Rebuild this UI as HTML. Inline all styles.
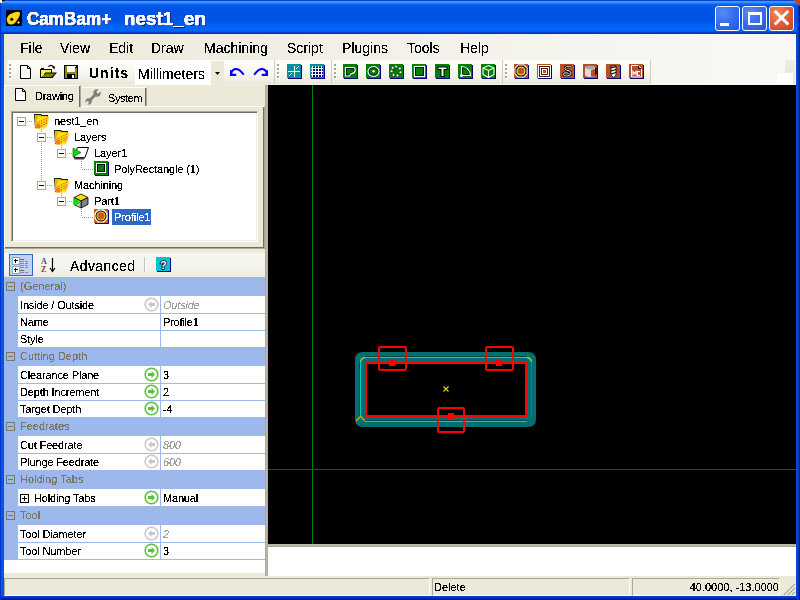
<!DOCTYPE html>
<html><head><meta charset="utf-8">
<style>
*{margin:0;padding:0;box-sizing:border-box}
html,body{width:800px;height:600px;overflow:hidden;background:#0046D5}
body{position:relative;font-family:"Liberation Sans",sans-serif;font-size:11px;color:#000;font-variant-ligatures:none}
.a{position:absolute}
.t{position:absolute;white-space:nowrap;line-height:1;filter:url(#bin)}
svg{position:absolute;display:block;overflow:visible}
</style></head><body>
<svg width="0" height="0" style="position:absolute"><filter id="bin" x="0" y="0" width="100%" height="100%" color-interpolation-filters="sRGB"><feComponentTransfer><feFuncA type="discrete" tableValues="0 0 1 1 1"/></feComponentTransfer></filter></svg>
<div class="a" style="left:0;top:0;width:800px;height:600px;background:linear-gradient(90deg,#0030C8 0,#0030C8 1px,#0058EE 1px,#0058EE 3px,#0054E3 3px,#0054E3 796px,#0050D8 796px,#0046C8 798px,#001E98 799px)"></div>
<div class="a" style="left:0;top:596px;width:800px;height:4px;background:linear-gradient(180deg,#0046E0 0,#0040D0 1px,#0030B8 2px,#001E98 3px,#00138C 4px)"></div>
<div class="a" style="left:0;top:0;width:800px;height:34px;border-radius:7px 7px 0 0;background:linear-gradient(180deg,#0848D0 0px,#0848D0 1px,#3A8FFF 1px,#4A9BFF 2px,#2C80FF 3px,#0A68F4 4px,#0058E8 6px,#0054E3 9px,#0054E3 20px,#005CEE 24px,#0066FA 28px,#0064F8 31px,#0050E0 32px,#0034B8 33px,#0030B0 34px)"></div>
<div class="a" style="left:0;top:0;width:2px;height:3px;background:#F0F0F0"></div>
<div class="a" style="left:2px;top:0;width:3px;height:1px;background:#101010"></div>
<div class="a" style="left:792px;top:0;width:8px;height:5px;background:linear-gradient(225deg,#B04820 0,#B04820 40%,transparent 60%)"></div>
<!-- app icon -->
<div class="a" style="left:6px;top:10px;width:16px;height:16px;background:#000"></div>
<svg style="left:6px;top:10px" width="16" height="16" viewBox="0 0 16 16"><path d="M1 11 C0 7 3 4 8 2.5 C11 1.5 13.5 1.5 14 3 C14.5 5 12.5 8 10.5 11 C8.5 14 6 15 4 14.5 C2 14 1.3 12.5 1 11Z" fill="#F5D816"/><circle cx="5.7" cy="9.3" r="1.5" fill="#000"/><path d="M12.5 11 L14 12.5 L12.5 14 L11 12.5Z" fill="#F5D816"/></svg>
<div class="t" style="left:27px;top:10px;font-size:18px;font-weight:bold;color:#fff;-webkit-text-stroke:0.5px #fff;transform:scaleX(0.95);transform-origin:0 0;text-shadow:1px 1px 0 #0A1E8C">CamBam+</div>
<div class="t" style="left:124px;top:10px;font-size:18px;font-weight:bold;color:#fff;-webkit-text-stroke:0.5px #fff;transform:scaleX(1.05);transform-origin:0 0;text-shadow:1px 1px 0 #0A1E8C">nest1_en</div>
<!-- caption buttons -->
<div class="a" style="left:715px;top:6px;width:25px;height:25px;border:1px solid #fff;border-radius:3px;background:radial-gradient(circle at 30% 25%,#5A8CF6 0,#3C72EE 40%,#1F55E0 100%)"></div>
<div class="a" style="left:720px;top:23px;width:9px;height:3px;background:#fff"></div>
<div class="a" style="left:742px;top:6px;width:25px;height:25px;border:1px solid #fff;border-radius:3px;background:radial-gradient(circle at 30% 25%,#5A8CF6 0,#3C72EE 40%,#1F55E0 100%)"></div>
<div class="a" style="left:748px;top:12px;width:14px;height:13px;border:2px solid #fff;border-top-width:3px"></div>
<div class="a" style="left:769px;top:6px;width:25px;height:25px;border:1px solid #fff;border-radius:3px;background:radial-gradient(circle at 30% 25%,#F08A60 0,#E3633A 40%,#C9401A 100%)"></div>
<svg style="left:769px;top:6px" width="25" height="25" viewBox="0 0 25 25"><path d="M6.8 6 L18.2 17.4 M18.2 6 L6.8 17.4" stroke="#fff" stroke-width="3" stroke-linecap="square"/></svg>
<div class="a" style="left:0;top:6px;width:1px;height:594px;background:#0034C4"></div>
<div class="a" style="left:797px;top:6px;width:3px;height:594px;background:linear-gradient(90deg,#0048D0 0,#0048D0 1px,#0036B8 1px,#0036B8 2px,#001C8C 2px)"></div>
<div class="a" style="left:4px;top:34px;width:792px;height:562px;background:#ECE9D8"></div>
<!-- menu bar -->
<div class="a" style="left:4px;top:34px;width:792px;height:26px;background:linear-gradient(90deg,#ECE9D8 0,#F1EFE6 40%,#F9F8F4 100%)"></div>
<div class="t" style="left:20px;top:41px;font-size:14px">File</div>
<div class="t" style="left:60px;top:41px;font-size:14px">View</div>
<div class="t" style="left:109px;top:41px;font-size:14px">Edit</div>
<div class="t" style="left:151px;top:41px;font-size:14px">Draw</div>
<div class="t" style="left:204px;top:41px;font-size:14px">Machining</div>
<div class="t" style="left:287px;top:41px;font-size:14px">Script</div>
<div class="t" style="left:342px;top:41px;font-size:14px">Plugins</div>
<div class="t" style="left:407px;top:41px;font-size:14px">Tools</div>
<div class="t" style="left:460px;top:41px;font-size:14px">Help</div>
<!-- toolstrip panel -->
<div class="a" style="left:4px;top:60px;width:792px;height:25px;background:linear-gradient(90deg,#ECE9D8 0,#F1EFE6 40%,#F9F8F4 100%)"></div>
<!-- toolbar 1 -->
<div class="a" style="left:7px;top:60px;width:268px;height:24px;border-radius:3px 0 0 3px;background:linear-gradient(180deg,#FDFDFB 0,#FAF9F5 40%,#F0EEE5 85%,#E9E6DA 100%);box-shadow:inset -1px 0 0 #D2CFC0"></div>
<div class="a" style="left:9px;top:64px;width:2px;height:2px;background:#A9A591;box-shadow:1px 1px 0 #fff,0 4px 0 #A9A591,1px 5px 0 #fff,0 8px 0 #A9A591,1px 9px 0 #fff,0 12px 0 #A9A591,1px 13px 0 #fff"></div>
<!-- new -->
<svg style="left:20px;top:65px" width="12" height="14" viewBox="0 0 12 14"><path d="M0.5 0.5 H7.5 L10.5 3.5 V13.5 H0.5 Z" fill="#fff" stroke="#000"/><path d="M7.5 0.5 V3.5 H10.5" fill="none" stroke="#000"/></svg>
<!-- open -->
<svg style="left:39px;top:63px" width="18" height="16" viewBox="0 0 18 16"><path d="M1 15 V6 H2 V5 H5 V6 H13 V9.5 H18 L13.5 15 Z" fill="#000"/><path d="M2 14 V7 H12 V9.5 H6.5 L2.8 14 Z" fill="#F4EA00"/><g fill="#fff"><rect x="3" y="7.5" width="1" height="1"/><rect x="5" y="7.5" width="1" height="1"/><rect x="7" y="7.5" width="1" height="1"/><rect x="9" y="7.5" width="1" height="1"/><rect x="11" y="7.5" width="1" height="1"/><rect x="4" y="9" width="1" height="1"/><rect x="2.5" y="10.5" width="1" height="1"/><rect x="4" y="11.5" width="1" height="1"/><rect x="2.5" y="12.5" width="1" height="1"/></g><path d="M3.2 14 L7 10.5 H16.2 L12.6 14 Z" fill="#808000"/><path d="M9.5 3.8 C10.5 1.8 13 1.8 14.5 3.8" fill="none" stroke="#000" stroke-width="1.2"/><path d="M12.6 3.4 H16.2 L15.4 6.4 Z" fill="#000"/></svg>
<!-- save -->
<svg style="left:64px;top:65px" width="14" height="14" viewBox="0 0 14 14" shape-rendering="crispEdges"><rect x="0" y="0" width="14" height="14" fill="#000"/><rect x="1" y="1" width="2" height="12" fill="#8C8A10"/><rect x="11" y="3" width="2" height="10" fill="#8C8A10"/><rect x="3" y="7" width="8" height="2" fill="#8C8A10"/><rect x="3" y="1" width="8" height="6" fill="#fff"/><rect x="11" y="1" width="1" height="1" fill="#fff"/><rect x="8" y="10" width="2" height="3" fill="#fff"/></svg>
<div class="t" style="left:89px;top:66px;font-size:14px;font-weight:bold;letter-spacing:1px">Units</div>
<div class="a" style="left:135px;top:61px;width:76px;height:24px;background:#fff"></div>
<div class="t" style="left:138px;top:67px;font-size:14px;width:66px;overflow:hidden">Millimeters</div>
<div class="a" style="left:211px;top:61px;width:13px;height:23px;background:#ECE9D8"></div>
<svg style="left:215px;top:72px" width="5" height="3" viewBox="0 0 5 3"><path d="M0 0H5L2.5 3Z" fill="#000"/></svg>
<!-- undo/redo -->
<svg style="left:229px;top:67px" width="16" height="10" viewBox="0 0 16 10"><path d="M2.5 5 C4.5 0.8 9.5 0.2 14.8 7.8" fill="none" stroke="#0000FF" stroke-width="2"/><path d="M1 3.2 L3.4 3.2 L3.4 6.8 L7.2 6.8 L7.2 9 L1 9 Z" fill="#0000FF"/></svg>
<svg style="left:253px;top:67px" width="16" height="10" viewBox="0 0 16 10"><g transform="translate(16 0) scale(-1 1)"><path d="M2.5 5 C4.5 0.8 9.5 0.2 14.8 7.8" fill="none" stroke="#0000FF" stroke-width="2"/><path d="M1 3.2 L3.4 3.2 L3.4 6.8 L7.2 6.8 L7.2 9 L1 9 Z" fill="#0000FF"/></g></svg>
<!-- toolbar 2 -->
<div class="a" style="left:275px;top:60px;width:57px;height:24px;border-radius:3px 0 0 3px;background:linear-gradient(180deg,#FDFDFB 0,#FAF9F5 40%,#F0EEE5 85%,#E9E6DA 100%);box-shadow:inset -1px 0 0 #D2CFC0"></div>
<div class="a" style="left:277px;top:64px;width:2px;height:2px;background:#A9A591;box-shadow:1px 1px 0 #fff,0 4px 0 #A9A591,1px 5px 0 #fff,0 8px 0 #A9A591,1px 9px 0 #fff,0 12px 0 #A9A591,1px 13px 0 #fff"></div>
<svg style="left:287px;top:64px" width="16" height="16" viewBox="0 0 16 16"><rect x="1" y="1" width="14" height="14" fill="#00007F"/><rect x="0" y="0" width="14" height="14" fill="#00929C"/><path d="M1 7.5 H13 M7.5 2 V13" stroke="#fff"/><path d="M9 5 L12 2 M2 12 L5 9" stroke="#fff"/></svg>
<svg style="left:310px;top:64px" width="16" height="16" viewBox="0 0 16 16"><rect x="1" y="1" width="14" height="14" fill="#00007F"/><rect x="0" y="0" width="14" height="14" fill="#00929C"/><rect x="2" y="3" width="11" height="10" fill="#00007F"/><path d="M1 4.5 H13 M1 7.5 H13 M1 10.5 H13 M2.5 2 V13 M5.5 2 V13 M8.5 2 V13 M11.5 2 V13" stroke="#fff"/></svg>
<!-- toolbar 3 -->
<div class="a" style="left:332px;top:60px;width:171px;height:24px;border-radius:3px 0 0 3px;background:linear-gradient(180deg,#FDFDFB 0,#FAF9F5 40%,#F0EEE5 85%,#E9E6DA 100%);box-shadow:inset -1px 0 0 #D2CFC0"></div>
<div class="a" style="left:334px;top:64px;width:2px;height:2px;background:#A9A591;box-shadow:1px 1px 0 #fff,0 4px 0 #A9A591,1px 5px 0 #fff,0 8px 0 #A9A591,1px 9px 0 #fff,0 12px 0 #A9A591,1px 13px 0 #fff"></div>
<svg style="left:343px;top:64px" width="16" height="16" viewBox="0 0 16 16"><rect x="1" y="1" width="14" height="14" fill="#00007F"/><rect x="0" y="0" width="14" height="14" fill="#007F00"/><path d="M2.5 3.5 H10 C12 3.5 12.5 5 12 7 C11.5 9 10 9.5 8 9.5 L6.5 12 H2.5 Z" fill="#000" stroke="#fff" stroke-width="1.2"/><path d="M4 5 H9.5 C10.5 5 11 6 10.5 7 C10 8 9 8 7.5 8 L6 10.5 H4Z" fill="#007F00"/></svg>
<svg style="left:366px;top:64px" width="16" height="16" viewBox="0 0 16 16"><rect x="1" y="1" width="14" height="14" fill="#00007F"/><rect x="0" y="0" width="14" height="14" fill="#007F00"/><ellipse cx="7.5" cy="7.5" rx="5.5" ry="4.8" fill="none" stroke="#fff" stroke-width="1.2"/><ellipse cx="7.5" cy="7.5" rx="4.3" ry="3.6" fill="none" stroke="#000" stroke-width="0.8"/><circle cx="7.5" cy="7.3" r="1.2" fill="#fff"/></svg>
<svg style="left:389px;top:64px" width="16" height="16" viewBox="0 0 16 16"><rect x="1" y="1" width="14" height="14" fill="#00007F"/><rect x="0" y="0" width="14" height="14" fill="#007F00"/><g fill="#fff" stroke="#000" stroke-width=".5"><circle cx="7" cy="2.6" r="1.4"/><circle cx="10.8" cy="4.5" r="1.4"/><circle cx="11.5" cy="8.3" r="1.4"/><circle cx="8.5" cy="11.5" r="1.4"/><circle cx="4.5" cy="11" r="1.4"/><circle cx="2.6" cy="7.2" r="1.4"/><circle cx="3.6" cy="3.8" r="1.4"/></g></svg>
<svg style="left:412px;top:64px" width="16" height="16" viewBox="0 0 16 16"><rect x="1" y="1" width="14" height="14" fill="#00007F"/><rect x="0" y="0" width="14" height="14" fill="#007F00"/><rect x="2.5" y="2.5" width="10" height="10" fill="none" stroke="#fff" stroke-width="1.2"/><rect x="3.5" y="3.5" width="8" height="8" fill="none" stroke="#000" stroke-width="0.8"/></svg>
<svg style="left:435px;top:64px" width="16" height="16" viewBox="0 0 16 16"><rect x="1" y="1" width="14" height="14" fill="#00007F"/><rect x="0" y="0" width="14" height="14" fill="#007F00"/><path d="M2.5 2.5 H12.5 V6 H9.5 V13 H5.5 V6 H2.5 Z" fill="#000"/><path d="M3.5 3.5 H11.5 V5 H8.5 V12 H6.5 V5 H3.5 Z" fill="#fff"/></svg>
<svg style="left:458px;top:64px" width="16" height="16" viewBox="0 0 16 16"><rect x="1" y="1" width="14" height="14" fill="#00007F"/><rect x="0" y="0" width="14" height="14" fill="#007F00"/><path d="M3.5 2.5 C8 2.5 12 6 12.5 11.5 H3.5 Z" fill="none" stroke="#fff" stroke-width="1.2"/><path d="M4.5 3.8 C8 4 11 7 11.3 10.5 H4.5Z" fill="none" stroke="#000" stroke-width="0.7"/><circle cx="3.5" cy="11.5" r="1.5" fill="#fff"/></svg>
<svg style="left:481px;top:64px" width="16" height="16" viewBox="0 0 16 16"><rect x="1" y="1" width="14" height="14" fill="#00007F"/><rect x="0" y="0" width="14" height="14" fill="#007F00"/><path d="M7.5 1.5 L13 4 V10.5 L7.5 13.5 L2 10.5 V4 Z M2 4 L7.5 6.5 L13 4 M7.5 6.5 V13.5" fill="none" stroke="#fff" stroke-width="1.1"/></svg>
<!-- toolbar 4 -->
<div class="a" style="left:503px;top:60px;width:148px;height:24px;border-radius:3px 0 0 3px;background:linear-gradient(180deg,#FDFDFB 0,#FAF9F5 40%,#F0EEE5 85%,#E9E6DA 100%);box-shadow:inset -1px 0 0 #D2CFC0"></div>
<div class="a" style="left:505px;top:64px;width:2px;height:2px;background:#A9A591;box-shadow:1px 1px 0 #fff,0 4px 0 #A9A591,1px 5px 0 #fff,0 8px 0 #A9A591,1px 9px 0 #fff,0 12px 0 #A9A591,1px 13px 0 #fff"></div>
<svg style="left:514px;top:64px" width="16" height="16" viewBox="0 0 16 16"><rect x="1" y="1" width="14" height="14" fill="#00007F"/><rect x="0" y="0" width="14" height="14" fill="#B4502A"/><path d="M4 0.5 H10 L13.5 4 V10 L10 13.5 H4 L0.5 10 V4 Z" fill="#fff"/><path d="M4.5 1.5 H9.5 L12.5 4.5 V9.5 L9.5 12.5 H4.5 L1.5 9.5 V4.5 Z" fill="#000"/><circle cx="7" cy="7" r="4.6" fill="#F0D800"/><circle cx="7" cy="7" r="3.2" fill="#B4502A"/></svg>
<svg style="left:537px;top:64px" width="16" height="16" viewBox="0 0 16 16"><rect x="1" y="1" width="14" height="14" fill="#00007F"/><rect x="0" y="0" width="14" height="14" fill="#B4502A"/><rect x="1.5" y="1.5" width="12" height="12" fill="none" stroke="#fff"/><rect x="3.5" y="3.5" width="8" height="8" fill="none" stroke="#fff"/><rect x="5.5" y="5.5" width="4" height="4" fill="none" stroke="#fff"/><rect x="2.5" y="2.5" width="10" height="10" fill="none" stroke="#000" stroke-width="0.6"/><rect x="4.5" y="4.5" width="6" height="6" fill="none" stroke="#000" stroke-width="0.6"/></svg>
<svg style="left:560px;top:64px" width="16" height="16" viewBox="0 0 16 16"><rect x="1" y="1" width="14" height="14" fill="#00007F"/><rect x="0" y="0" width="14" height="14" fill="#B4502A"/><path d="M11 3 C9 1.5 5 2 5 4.5 C5 7 11 6 11 9 C11 12 5 13 3.5 11 C2.5 9 6 8 8.5 9.5" fill="none" stroke="#000" stroke-width="2.4"/><path d="M11 3 C9 1.5 5 2 5 4.5 C5 7 11 6 11 9 C11 12 5 13 3.5 11 C2.5 9 6 8 8.5 9.5" fill="none" stroke="#fff" stroke-width="1"/></svg>
<svg style="left:583px;top:64px" width="16" height="16" viewBox="0 0 16 16"><rect x="1" y="1" width="14" height="14" fill="#00007F"/><rect x="0" y="0" width="14" height="14" fill="#B4502A"/><path d="M2 3.5 C2 1.5 12 1.5 12 3.5 V11 C12 13.5 2 13.5 2 11 Z" fill="#E0DED8"/><ellipse cx="7" cy="3.5" rx="5" ry="1.8" fill="#A8A8A8"/><path d="M8 6 V12.5 C10 12.5 12 12 12 11 V5 Z" fill="#B4502A"/><path d="M12 4 V11.5 L13.5 10 V4" fill="#000"/></svg>
<svg style="left:606px;top:64px" width="16" height="16" viewBox="0 0 16 16"><rect x="1" y="1" width="14" height="14" fill="#00007F"/><rect x="0" y="0" width="14" height="14" fill="#B4502A"/><path d="M5 2 H10 V11 L7.5 14 L5 11 Z" fill="#fff" stroke="#000" stroke-width="0.8"/><path d="M5 4 L10 2.5 M5 7 L10 5.5 M5 10 L10 8.5" stroke="#000" stroke-width="1.3"/></svg>
<svg style="left:629px;top:64px" width="16" height="16" viewBox="0 0 16 16"><rect x="1" y="1" width="14" height="14" fill="#00007F"/><rect x="0" y="0" width="14" height="14" fill="#B4502A"/><path d="M2.5 1.5 H9.5 L12.5 4.5 V13 H2.5 Z" fill="#B4502A" stroke="#fff" stroke-width="1"/><path d="M9.5 1.5 V4.5 H12.5" fill="none" stroke="#000" stroke-width=".8"/><path d="M4 11.5 V7.5 L5.5 9.5 L7 7.5 V11.5 M11 7.5 H8.5 V11.5 H11" fill="none" stroke="#fff" stroke-width="1.2"/></svg>
<!-- right small toolbar remnant -->
<div class="a" style="left:785px;top:60px;width:10px;height:24px;background:linear-gradient(180deg,#EFEDE3 0,#E6E3D5 100%)"></div>
<div class="a" style="left:777px;top:73px;width:16px;height:11px;background:#fff"></div>
<!-- left panel tab strip area -->
<div class="a" style="left:4px;top:85px;width:261px;height:491px;background:#ECE9D8"></div>
<!-- tab page border -->
<div class="a" style="left:4px;top:106px;width:261px;height:143px;border-left:1px solid #fff;border-top:1px solid #fff;border-right:1px solid #ACA899;border-bottom:1px solid #ACA899;box-shadow:inset -1px -1px 0 #716F64"></div>
<!-- System tab (unselected) -->
<div class="a" style="left:81px;top:87px;width:66px;height:19px;background:#ECE9D8;border-top:1px solid #fff;border-right:1px solid #ACA899;box-shadow:inset -1px 0 0 #716F64"></div>
<!-- Drawing tab (selected) -->
<div class="a" style="left:4px;top:85px;width:77px;height:22px;background:#ECE9D8;border-top:1px solid #fff;border-left:1px solid #fff;border-right:1px solid #ACA899;box-shadow:inset -1px 0 0 #716F64;border-radius:2px 0 0 0"></div>
<svg style="left:15px;top:88px" width="12" height="13" viewBox="0 0 12 13"><path d="M0.5 0.5 H7.5 L10.5 3.5 V12.5 H0.5 Z" fill="#fff" stroke="#000"/><path d="M7.5 0.5 V3.5 H10.5" fill="none" stroke="#000"/></svg>
<div class="t" style="left:35px;top:91px;font-size:11px;letter-spacing:-0.25px">Drawing</div>
<svg style="left:85px;top:89px" width="16" height="16" viewBox="0 0 16 16"><path d="M4 12 L11.5 4.5" stroke="#808080" stroke-width="3"/><circle cx="12" cy="4" r="3.7" fill="#808080"/><circle cx="3.6" cy="12.4" r="3.1" fill="#808080"/><path d="M13.06 4.78 L17.30 0.54 L15.46 -1.30 L11.22 2.94Z M2.61 11.69 L-1.63 15.94 L0.06 17.63 L4.31 13.39Z" fill="#ECE9D8"/></svg>
<div class="t" style="left:108px;top:93px;font-size:11px;letter-spacing:-0.4px">System</div>
<!-- tree box -->
<div class="a" style="left:11px;top:111px;width:247px;height:131px;background:#fff;border-left:1px solid #ACA899;border-top:1px solid #ACA899;border-right:1px solid #fff;border-bottom:1px solid #fff;box-shadow:inset 1px 1px 0 #716F64,inset -1px -1px 0 #F1EFE2"></div>
<div class="a" style="left:41px;top:129px;width:1px;height:56px;background:repeating-linear-gradient(180deg,#A0A0A0 0,#A0A0A0 1px,transparent 1px,transparent 2px)"></div>
<div class="a" style="left:61px;top:145px;width:1px;height:8px;background:repeating-linear-gradient(180deg,#A0A0A0 0,#A0A0A0 1px,transparent 1px,transparent 2px)"></div>
<div class="a" style="left:81px;top:161px;width:1px;height:8px;background:repeating-linear-gradient(180deg,#A0A0A0 0,#A0A0A0 1px,transparent 1px,transparent 2px)"></div>
<div class="a" style="left:61px;top:193px;width:1px;height:8px;background:repeating-linear-gradient(180deg,#A0A0A0 0,#A0A0A0 1px,transparent 1px,transparent 2px)"></div>
<div class="a" style="left:81px;top:209px;width:1px;height:8px;background:repeating-linear-gradient(180deg,#A0A0A0 0,#A0A0A0 1px,transparent 1px,transparent 2px)"></div>
<div class="a" style="left:17px;top:117px;width:9px;height:9px;border:1px solid #ACA899;background:#fff"></div>
<div class="a" style="left:19px;top:121px;width:5px;height:1px;background:#000"></div>
<div class="a" style="left:27px;top:121px;width:6px;height:1px;background:repeating-linear-gradient(90deg,#A0A0A0 0,#A0A0A0 1px,transparent 1px,transparent 2px)"></div>
<svg style="left:33px;top:113px" width="16" height="16" viewBox="0 0 16 16"><path d="M1 1 H8 L9 2 H15 V10 L12 15 H2 Z" fill="#1A1A00"/><path d="M2 2 H7.5 L8.5 3 H14 V4 H4.5 L3.5 14 H2 Z" fill="#D8B800"/><path d="M4.5 3.5 H16 L15 10.5 L12 15.5 H2.5 Z" fill="#FFE000"/><path d="M2.5 15.5 L4 9 L8 13 L7 15.5Z" fill="#F08030" opacity=".8"/><g fill="#E84828"><circle cx="13.5" cy="5.5" r=".75"/><circle cx="11" cy="6.8" r=".75"/><circle cx="13.5" cy="8" r=".75"/><circle cx="8.5" cy="8" r=".75"/><circle cx="11" cy="9.3" r=".75"/><circle cx="6" cy="9.3" r=".75"/><circle cx="8.5" cy="10.5" r=".75"/><circle cx="13" cy="10.5" r=".75"/><circle cx="11" cy="11.8" r=".75"/><circle cx="6" cy="11.8" r=".75"/><circle cx="8.5" cy="13" r=".75"/><circle cx="4" cy="13" r=".75"/><circle cx="6" cy="14.3" r=".75"/></g></svg>
<div class="t" style="letter-spacing:-0.12px;left:54px;top:116px">nest1_en</div>
<div class="a" style="left:37px;top:133px;width:9px;height:9px;border:1px solid #ACA899;background:#fff"></div>
<div class="a" style="left:39px;top:137px;width:5px;height:1px;background:#000"></div>
<div class="a" style="left:47px;top:137px;width:6px;height:1px;background:repeating-linear-gradient(90deg,#A0A0A0 0,#A0A0A0 1px,transparent 1px,transparent 2px)"></div>
<svg style="left:53px;top:129px" width="16" height="16" viewBox="0 0 16 16"><path d="M1 1 H8 L9 2 H15 V10 L12 15 H2 Z" fill="#1A1A00"/><path d="M2 2 H7.5 L8.5 3 H14 V4 H4.5 L3.5 14 H2 Z" fill="#D8B800"/><path d="M4.5 3.5 H16 L15 10.5 L12 15.5 H2.5 Z" fill="#FFE000"/><path d="M2.5 15.5 L4 9 L8 13 L7 15.5Z" fill="#F08030" opacity=".8"/><g fill="#E84828"><circle cx="13.5" cy="5.5" r=".75"/><circle cx="11" cy="6.8" r=".75"/><circle cx="13.5" cy="8" r=".75"/><circle cx="8.5" cy="8" r=".75"/><circle cx="11" cy="9.3" r=".75"/><circle cx="6" cy="9.3" r=".75"/><circle cx="8.5" cy="10.5" r=".75"/><circle cx="13" cy="10.5" r=".75"/><circle cx="11" cy="11.8" r=".75"/><circle cx="6" cy="11.8" r=".75"/><circle cx="8.5" cy="13" r=".75"/><circle cx="4" cy="13" r=".75"/><circle cx="6" cy="14.3" r=".75"/></g></svg>
<div class="t" style="letter-spacing:-0.12px;left:74px;top:132px">Layers</div>
<div class="a" style="left:57px;top:149px;width:9px;height:9px;border:1px solid #ACA899;background:#fff"></div>
<div class="a" style="left:59px;top:153px;width:5px;height:1px;background:#000"></div>
<div class="a" style="left:67px;top:153px;width:6px;height:1px;background:repeating-linear-gradient(90deg,#A0A0A0 0,#A0A0A0 1px,transparent 1px,transparent 2px)"></div>
<svg style="left:73px;top:145px" width="16" height="16" viewBox="0 0 16 16"><path d="M4.5 2.5 H15.5 L12 12.5 H1 Z" fill="#fff" stroke="#000"/><path d="M1 12.5 H12 L11 14.5 H1.5 Z" fill="#404040"/><path d="M0 3 L8 7.5 L0 12 Z" fill="#00E000" stroke="#006000" stroke-width=".6"/></svg>
<div class="t" style="letter-spacing:-0.12px;left:94px;top:148px">Layer1</div>
<div class="a" style="left:82px;top:169px;width:11px;height:1px;background:repeating-linear-gradient(90deg,#A0A0A0 0,#A0A0A0 1px,transparent 1px,transparent 2px)"></div>
<svg style="left:94px;top:161px" width="16" height="16" viewBox="0 0 16 16"><rect x="1" y="1" width="14" height="14" fill="#00007F"/><rect x="0" y="0" width="14" height="14" fill="#007F00"/><rect x="2" y="2" width="10" height="10" fill="#fff"/><rect x="3" y="3" width="8" height="8" fill="#000"/><rect x="4" y="4" width="6" height="6" fill="#007F00"/></svg>
<div class="t" style="letter-spacing:-0.12px;left:114px;top:164px">PolyRectangle (1)</div>
<div class="a" style="left:37px;top:181px;width:9px;height:9px;border:1px solid #ACA899;background:#fff"></div>
<div class="a" style="left:39px;top:185px;width:5px;height:1px;background:#000"></div>
<div class="a" style="left:47px;top:185px;width:6px;height:1px;background:repeating-linear-gradient(90deg,#A0A0A0 0,#A0A0A0 1px,transparent 1px,transparent 2px)"></div>
<svg style="left:53px;top:177px" width="16" height="16" viewBox="0 0 16 16"><path d="M1 1 H8 L9 2 H15 V10 L12 15 H2 Z" fill="#1A1A00"/><path d="M2 2 H7.5 L8.5 3 H14 V4 H4.5 L3.5 14 H2 Z" fill="#D8B800"/><path d="M4.5 3.5 H16 L15 10.5 L12 15.5 H2.5 Z" fill="#FFE000"/><path d="M2.5 15.5 L4 9 L8 13 L7 15.5Z" fill="#F08030" opacity=".8"/><g fill="#E84828"><circle cx="13.5" cy="5.5" r=".75"/><circle cx="11" cy="6.8" r=".75"/><circle cx="13.5" cy="8" r=".75"/><circle cx="8.5" cy="8" r=".75"/><circle cx="11" cy="9.3" r=".75"/><circle cx="6" cy="9.3" r=".75"/><circle cx="8.5" cy="10.5" r=".75"/><circle cx="13" cy="10.5" r=".75"/><circle cx="11" cy="11.8" r=".75"/><circle cx="6" cy="11.8" r=".75"/><circle cx="8.5" cy="13" r=".75"/><circle cx="4" cy="13" r=".75"/><circle cx="6" cy="14.3" r=".75"/></g></svg>
<div class="t" style="letter-spacing:-0.12px;left:74px;top:180px">Machining</div>
<div class="a" style="left:57px;top:197px;width:9px;height:9px;border:1px solid #ACA899;background:#fff"></div>
<div class="a" style="left:59px;top:201px;width:5px;height:1px;background:#000"></div>
<div class="a" style="left:67px;top:201px;width:6px;height:1px;background:repeating-linear-gradient(90deg,#A0A0A0 0,#A0A0A0 1px,transparent 1px,transparent 2px)"></div>
<svg style="left:73px;top:193px" width="16" height="16" viewBox="0 0 16 16"><path d="M1 4.5 L8 1 L15 4.5 L8 8 Z" fill="#F0E000" stroke="#000" stroke-width=".8"/><path d="M8 8 L15 4.5 V11.5 L8 15 Z" fill="#808080" stroke="#000" stroke-width=".8"/><path d="M1 4.5 L8 8 V15 L1 11.5 Z" fill="#C0C0C0" stroke="#000" stroke-width=".8"/><path d="M1 5 L8 9.5 L1 13 Z" fill="#00E000"/></svg>
<div class="t" style="letter-spacing:-0.12px;left:94px;top:196px">Part1</div>
<div class="a" style="left:82px;top:217px;width:11px;height:1px;background:repeating-linear-gradient(90deg,#A0A0A0 0,#A0A0A0 1px,transparent 1px,transparent 2px)"></div>
<svg style="left:94px;top:209px" width="16" height="16" viewBox="0 0 16 16"><rect x="1" y="1" width="14" height="14" fill="#00007F"/><rect x="0" y="0" width="14" height="14" fill="#C85A28"/><path d="M4 0.5 H10 L13.5 4 V10 L10 13.5 H4 L0.5 10 V4 Z" fill="#fff"/><circle cx="7" cy="7" r="5.5" fill="#000"/><circle cx="7" cy="7" r="4.6" fill="#F0D000"/><circle cx="7" cy="7" r="3.4" fill="#C85A28"/></svg>
<div class="a" style="left:112px;top:209px;width:39px;height:16px;background:#316AC5"></div>
<div class="t" style="letter-spacing:-0.12px;left:114px;top:212px;color:#fff">Profile1</div>
<div class="a" style="left:4px;top:253px;width:261px;height:24px;background:linear-gradient(180deg,#F7F6F1 0,#F4F3EC 60%,#EEECE2 100%)"></div>
<div class="a" style="left:9px;top:254px;width:24px;height:22px;border:1px solid #316AC5;background:#C1D2EE"></div>
<svg style="left:12px;top:257px" width="18" height="17" viewBox="0 0 18 17" shape-rendering="crispEdges"><rect x="0" y="0" width="7" height="7" fill="#fff" stroke="#88A8C8" stroke-width="1"/><rect x="0" y="9" width="7" height="7" fill="#fff" stroke="#88A8C8" stroke-width="1"/><path d="M1.5 3 H5.5 V4 H1.5Z M3 1.5 H4 V5.5 H3Z M1.5 12 H5.5 V13 H1.5Z M3 10.5 H4 V14.5 H3Z" fill="#000"/><rect x="8" y="2" width="4" height="1" fill="#606850"/><rect x="8" y="13" width="4" height="1" fill="#606850"/><g fill="#8C80C8"><rect x="8" y="4" width="4" height="1"/><rect x="13" y="4" width="3" height="1"/><rect x="8" y="6" width="4" height="1"/><rect x="13" y="6" width="3" height="1"/><rect x="8" y="8" width="4" height="1"/><rect x="13" y="8" width="3" height="1"/><rect x="8" y="10" width="4" height="1"/><rect x="13" y="10" width="3" height="1"/><rect x="8" y="15" width="4" height="1"/><rect x="13" y="15" width="3" height="1"/></g></svg>
<svg style="left:41px;top:257px" width="16" height="16" viewBox="0 0 16 16"><text x="0" y="7" font-family="Liberation Serif" font-weight="bold" font-size="8" fill="#3050A0">A</text><text x="0" y="15" font-family="Liberation Serif" font-weight="bold" font-size="8" fill="#A03030">Z</text><path d="M11.5 1 V14 M9 11 L11.5 14.5 L14 11" fill="none" stroke="#000" stroke-width="1.2"/></svg>
<div class="t" style="left:70px;top:259px;font-size:14px;letter-spacing:0.4px">Advanced</div>
<div class="a" style="left:144px;top:257px;width:1px;height:15px;background:#C5C2B2;box-shadow:1px 0 0 #fff"></div>
<svg style="left:156px;top:257px" width="16" height="16" viewBox="0 0 16 16"><rect x="1" y="1" width="14" height="14" fill="#00007F"/><rect x="0" y="0" width="14" height="14" fill="#00C4D0"/><text x="4" y="12" font-family="Liberation Sans" font-weight="bold" font-size="11" fill="#fff" stroke="#000" stroke-width="1.6" paint-order="stroke">?</text></svg>
<div class="a" style="left:4px;top:277px;width:261px;height:296px;background:#fff"></div>
<div class="a" style="left:4px;top:277px;width:261px;height:19px;background:#9DB9EB"></div>
<div class="a" style="left:6px;top:282px;width:9px;height:9px;border:1px solid #7A776A"></div><div class="a" style="left:8px;top:286px;width:5px;height:1px;background:#7A776A"></div>
<div class="t" style="left:20px;top:281px;color:#7A776A">(General)</div>
<div class="a" style="left:4px;top:296px;width:14px;height:17px;background:#9DB9EB"></div>
<div class="a" style="left:160px;top:296px;width:1px;height:17px;background:#9DB9EB"></div>
<div class="t" style="left:20px;top:300px;letter-spacing:-0.15px">Inside / Outside</div>
<svg style="left:144px;top:297px" width="15" height="15" viewBox="0 0 15 15"><circle cx="7.5" cy="7.5" r="6.3" fill="#fff" stroke="#C8C8C8" stroke-width="1.6"/><path d="M4 7.5 L7.5 4 V6 H11 V9 H7.5 V11 Z" fill="#C8C8C8"/></svg>
<div class="t" style="left:163px;top:300px;letter-spacing:-0.2px;color:#A0A0A0;font-style:italic;">Outside</div>
<div class="a" style="left:4px;top:313px;width:261px;height:1px;background:#9DB9EB"></div>
<div class="a" style="left:4px;top:314px;width:14px;height:16px;background:#9DB9EB"></div>
<div class="a" style="left:160px;top:314px;width:1px;height:16px;background:#9DB9EB"></div>
<div class="t" style="left:20px;top:317px;letter-spacing:-0.15px">Name</div>
<div class="t" style="left:163px;top:317px;letter-spacing:-0.2px;">Profile1</div>
<div class="a" style="left:4px;top:330px;width:261px;height:1px;background:#9DB9EB"></div>
<div class="a" style="left:4px;top:331px;width:14px;height:16px;background:#9DB9EB"></div>
<div class="a" style="left:160px;top:331px;width:1px;height:16px;background:#9DB9EB"></div>
<div class="t" style="left:20px;top:334px;letter-spacing:-0.15px">Style</div>
<div class="a" style="left:4px;top:347px;width:261px;height:19px;background:#9DB9EB"></div>
<div class="a" style="left:6px;top:352px;width:9px;height:9px;border:1px solid #7A776A"></div><div class="a" style="left:8px;top:356px;width:5px;height:1px;background:#7A776A"></div>
<div class="t" style="left:20px;top:351px;color:#7A776A">Cutting Depth</div>
<div class="a" style="left:4px;top:366px;width:14px;height:17px;background:#9DB9EB"></div>
<div class="a" style="left:160px;top:366px;width:1px;height:17px;background:#9DB9EB"></div>
<div class="t" style="left:20px;top:370px;letter-spacing:-0.15px">Clearance Plane</div>
<svg style="left:144px;top:367px" width="15" height="15" viewBox="0 0 15 15"><circle cx="7.5" cy="7.5" r="6.3" fill="#fff" stroke="#5CBF38" stroke-width="1.6"/><path d="M11 7.5 L7.5 4 V6 H4 V9 H7.5 V11 Z" fill="#5CBF38"/></svg>
<div class="t" style="left:163px;top:370px;letter-spacing:-0.2px;">3</div>
<div class="a" style="left:4px;top:383px;width:261px;height:1px;background:#9DB9EB"></div>
<div class="a" style="left:4px;top:384px;width:14px;height:16px;background:#9DB9EB"></div>
<div class="a" style="left:160px;top:384px;width:1px;height:16px;background:#9DB9EB"></div>
<div class="t" style="left:20px;top:387px;letter-spacing:-0.15px">Depth Increment</div>
<svg style="left:144px;top:384px" width="15" height="15" viewBox="0 0 15 15"><circle cx="7.5" cy="7.5" r="6.3" fill="#fff" stroke="#5CBF38" stroke-width="1.6"/><path d="M11 7.5 L7.5 4 V6 H4 V9 H7.5 V11 Z" fill="#5CBF38"/></svg>
<div class="t" style="left:163px;top:387px;letter-spacing:-0.2px;">2</div>
<div class="a" style="left:4px;top:400px;width:261px;height:1px;background:#9DB9EB"></div>
<div class="a" style="left:4px;top:401px;width:14px;height:16px;background:#9DB9EB"></div>
<div class="a" style="left:160px;top:401px;width:1px;height:16px;background:#9DB9EB"></div>
<div class="t" style="left:20px;top:404px;letter-spacing:-0.15px">Target Depth</div>
<svg style="left:144px;top:401px" width="15" height="15" viewBox="0 0 15 15"><circle cx="7.5" cy="7.5" r="6.3" fill="#fff" stroke="#5CBF38" stroke-width="1.6"/><path d="M11 7.5 L7.5 4 V6 H4 V9 H7.5 V11 Z" fill="#5CBF38"/></svg>
<div class="t" style="left:163px;top:404px;letter-spacing:-0.2px;">-4</div>
<div class="a" style="left:4px;top:417px;width:261px;height:19px;background:#9DB9EB"></div>
<div class="a" style="left:6px;top:422px;width:9px;height:9px;border:1px solid #7A776A"></div><div class="a" style="left:8px;top:426px;width:5px;height:1px;background:#7A776A"></div>
<div class="t" style="left:20px;top:421px;color:#7A776A">Feedrates</div>
<div class="a" style="left:4px;top:436px;width:14px;height:17px;background:#9DB9EB"></div>
<div class="a" style="left:160px;top:436px;width:1px;height:17px;background:#9DB9EB"></div>
<div class="t" style="left:20px;top:440px;letter-spacing:-0.15px">Cut Feedrate</div>
<svg style="left:144px;top:437px" width="15" height="15" viewBox="0 0 15 15"><circle cx="7.5" cy="7.5" r="6.3" fill="#fff" stroke="#C8C8C8" stroke-width="1.6"/><path d="M4 7.5 L7.5 4 V6 H11 V9 H7.5 V11 Z" fill="#C8C8C8"/></svg>
<div class="t" style="left:163px;top:440px;letter-spacing:-0.2px;color:#A0A0A0;font-style:italic;">800</div>
<div class="a" style="left:4px;top:453px;width:261px;height:1px;background:#9DB9EB"></div>
<div class="a" style="left:4px;top:454px;width:14px;height:16px;background:#9DB9EB"></div>
<div class="a" style="left:160px;top:454px;width:1px;height:16px;background:#9DB9EB"></div>
<div class="t" style="left:20px;top:457px;letter-spacing:-0.15px">Plunge Feedrate</div>
<svg style="left:144px;top:454px" width="15" height="15" viewBox="0 0 15 15"><circle cx="7.5" cy="7.5" r="6.3" fill="#fff" stroke="#C8C8C8" stroke-width="1.6"/><path d="M4 7.5 L7.5 4 V6 H11 V9 H7.5 V11 Z" fill="#C8C8C8"/></svg>
<div class="t" style="left:163px;top:457px;letter-spacing:-0.2px;color:#A0A0A0;font-style:italic;">600</div>
<div class="a" style="left:4px;top:470px;width:261px;height:19px;background:#9DB9EB"></div>
<div class="a" style="left:6px;top:475px;width:9px;height:9px;border:1px solid #7A776A"></div><div class="a" style="left:8px;top:479px;width:5px;height:1px;background:#7A776A"></div>
<div class="t" style="left:20px;top:474px;color:#7A776A">Holding Tabs</div>
<div class="a" style="left:4px;top:489px;width:14px;height:17px;background:#9DB9EB"></div>
<div class="a" style="left:160px;top:489px;width:1px;height:17px;background:#9DB9EB"></div>
<div class="a" style="left:20px;top:494px;width:9px;height:9px;border:1px solid #000"></div><div class="a" style="left:22px;top:498px;width:5px;height:1px;background:#000"></div><div class="a" style="left:24px;top:496px;width:1px;height:5px;background:#000"></div>
<div class="t" style="left:34px;top:493px;letter-spacing:-0.15px">Holding Tabs</div>
<svg style="left:144px;top:490px" width="15" height="15" viewBox="0 0 15 15"><circle cx="7.5" cy="7.5" r="6.3" fill="#fff" stroke="#5CBF38" stroke-width="1.6"/><path d="M11 7.5 L7.5 4 V6 H4 V9 H7.5 V11 Z" fill="#5CBF38"/></svg>
<div class="t" style="left:163px;top:493px;letter-spacing:-0.2px;">Manual</div>
<div class="a" style="left:4px;top:506px;width:261px;height:19px;background:#9DB9EB"></div>
<div class="a" style="left:6px;top:511px;width:9px;height:9px;border:1px solid #7A776A"></div><div class="a" style="left:8px;top:515px;width:5px;height:1px;background:#7A776A"></div>
<div class="t" style="left:20px;top:510px;color:#7A776A">Tool</div>
<div class="a" style="left:4px;top:525px;width:14px;height:17px;background:#9DB9EB"></div>
<div class="a" style="left:160px;top:525px;width:1px;height:17px;background:#9DB9EB"></div>
<div class="t" style="left:20px;top:529px;letter-spacing:-0.15px">Tool Diameter</div>
<svg style="left:144px;top:526px" width="15" height="15" viewBox="0 0 15 15"><circle cx="7.5" cy="7.5" r="6.3" fill="#fff" stroke="#C8C8C8" stroke-width="1.6"/><path d="M4 7.5 L7.5 4 V6 H11 V9 H7.5 V11 Z" fill="#C8C8C8"/></svg>
<div class="t" style="left:163px;top:529px;letter-spacing:-0.2px;color:#A0A0A0;font-style:italic;">2</div>
<div class="a" style="left:4px;top:542px;width:261px;height:1px;background:#9DB9EB"></div>
<div class="a" style="left:4px;top:543px;width:14px;height:16px;background:#9DB9EB"></div>
<div class="a" style="left:160px;top:543px;width:1px;height:16px;background:#9DB9EB"></div>
<div class="t" style="left:20px;top:546px;letter-spacing:-0.15px">Tool Number</div>
<svg style="left:144px;top:543px" width="15" height="15" viewBox="0 0 15 15"><circle cx="7.5" cy="7.5" r="6.3" fill="#fff" stroke="#5CBF38" stroke-width="1.6"/><path d="M11 7.5 L7.5 4 V6 H4 V9 H7.5 V11 Z" fill="#5CBF38"/></svg>
<div class="t" style="left:163px;top:546px;letter-spacing:-0.2px;">3</div>
<div class="a" style="left:4px;top:559px;width:261px;height:1px;background:#9DB9EB"></div>
<!-- splitter -->
<div class="a" style="left:265px;top:85px;width:3px;height:491px;background:linear-gradient(90deg,#ADA997 0,#ADA997 1px,#BCB9A8 1px,#BCB9A8 2px,#B2AE9C 2px)"></div>
<!-- viewport -->
<div class="a" style="left:268px;top:85px;width:528px;height:459px;background:#000;overflow:hidden">
<div class="a" style="left:0;top:384px;width:528px;height:1px;background:#C80000"></div>
<div class="a" style="left:44px;top:0;width:1px;height:459px;background:#008000"></div>
</div>
<svg style="left:0;top:0" width="800" height="600" viewBox="0 0 800 600">
<path d="M363 352 H528 Q536 352 536 360 V419 Q536 427 528 427 H363 Q355 427 355 419 V360 Q355 352 363 352 Z M365 362 V417 H527 V362 Z" fill="#006F6F" fill-rule="evenodd"/>
<g shape-rendering="crispEdges">
<rect x="359" y="362" width="1" height="55" fill="#004A4A"/>
<rect x="365" y="356" width="162" height="1" fill="#004A4A"/>
<rect x="365" y="420" width="162" height="1" fill="#004A4A"/>
<rect x="360" y="362" width="1" height="55" fill="#00CCCC"/>
<rect x="365" y="357" width="162" height="1" fill="#00CCCC"/>
<rect x="365" y="421" width="162" height="1" fill="#00CCCC"/>
<rect x="531" y="362" width="1" height="55" fill="#008A8A"/>
</g>
<path d="M360.5 362 Q361 358 365 357.5" fill="none" stroke="#90D040" stroke-width="1.3"/>
<path d="M527 357.5 Q531 358 531.5 362" fill="none" stroke="#90D040" stroke-width="1.3"/>
<path d="M356 421 L360.5 416.5 L365 421" fill="none" stroke="#D0A800" stroke-width="1.3"/>
<g shape-rendering="crispEdges" fill="#FF0000">
<rect x="365" y="362" width="162" height="2"/>
<rect x="365" y="415" width="162" height="2"/>
<rect x="365" y="362" width="2" height="55"/>
<rect x="525" y="362" width="2" height="55"/>
<rect x="389" y="360" width="6" height="6"/>
<rect x="496" y="360" width="6" height="6"/>
<rect x="448" y="413" width="6" height="6"/>
</g>
<g fill="none" stroke="#FF0000" stroke-width="2">
<rect x="379" y="347" width="27" height="23" rx="1.5"/>
<rect x="486" y="347" width="27" height="23" rx="1.5"/>
<rect x="438" y="408" width="26" height="24" rx="1.5"/>
</g>
<path d="M443.5 386.5 L448.5 391.5 M448.5 386.5 L443.5 391.5" stroke="#E0D000" stroke-width="1.2"/>
</svg>
<!-- below viewport -->
<div class="a" style="left:268px;top:544px;width:528px;height:3px;background:linear-gradient(180deg,#B8B4A2 0,#B8B4A2 1px,#BCB9A8 1px,#BCB9A8 2px,#A9A593 2px)"></div>
<div class="a" style="left:268px;top:547px;width:528px;height:29px;background:#fff"></div>
<!-- status bar -->
<div class="a" style="left:4px;top:576px;width:792px;height:20px;background:#ECE9D8"></div>
<div class="a" style="left:4px;top:578px;width:426px;height:18px;border-left:1px solid #ACA899;border-top:1px solid #ACA899;border-right:1px solid #fff;border-bottom:1px solid #fff"></div>
<div class="a" style="left:432px;top:578px;width:198px;height:18px;border-left:1px solid #ACA899;border-top:1px solid #ACA899;border-right:1px solid #fff;border-bottom:1px solid #fff"></div>
<div class="a" style="left:632px;top:578px;width:148px;height:18px;border-left:1px solid #ACA899;border-top:1px solid #ACA899;border-right:1px solid #fff;border-bottom:1px solid #fff"></div>
<div class="t" style="left:434px;top:582px">Delete</div>
<div class="t" style="left:632px;top:582px;width:147px;text-align:right">40.0000, -13.0000</div>
<svg style="left:783px;top:583px" width="13" height="13" viewBox="0 0 13 13"><path d="M12 1 L1 12 M12 5 L5 12 M12 9 L9 12" stroke="#ACA899" stroke-width="1.5"/><path d="M12.5 2 L2 12.5 M12.5 6 L6 12.5 M12.5 10 L10 12.5" stroke="#fff" stroke-width="0.8"/></svg>

</body></html>
